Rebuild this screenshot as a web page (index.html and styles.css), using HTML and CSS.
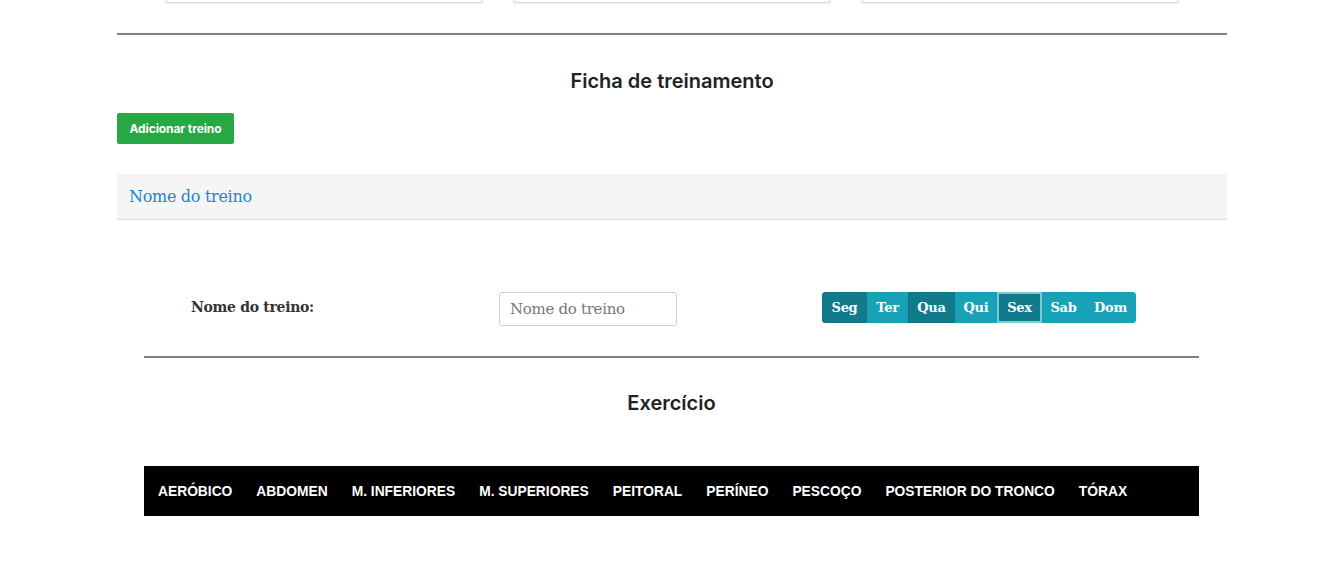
FILE: index.html
```html
<!DOCTYPE html>
<html lang="pt">
<head>
<meta charset="utf-8">
<title>Ficha de treinamento</title>
<link rel="stylesheet" href="styles.css">
</head>
<body>
<div class="container">
  <div class="top-fields">
    <div class="field-stub"></div>
    <div class="field-stub"></div>
    <div class="field-stub"></div>
  </div>
  <hr class="rule rule-top">
  <h2 class="section-title title-ficha">Ficha de treinamento</h2>
  <button class="btn-add" type="button">Adicionar treino</button>
  <div class="panel">
    <div class="panel-heading"><a class="panel-link">Nome do treino</a></div>
    <div class="panel-body">
      <div class="form-row">
        <label class="form-label">Nome do treino:</label>
        <input class="form-input" type="text" placeholder="Nome do treino">
        <div class="day-group">
          <button class="day dark" type="button">Seg</button>
          <button class="day" type="button">Ter</button>
          <button class="day dark" type="button">Qua</button>
          <button class="day" type="button">Qui</button>
          <button class="day dark focus" type="button">Sex</button>
          <button class="day" type="button">Sab</button>
          <button class="day last" type="button">Dom</button>
        </div>
      </div>
      <hr class="rule rule-inner">
      <h2 class="section-title title-ex">Exercício</h2>
      <nav class="cat-nav">
        <a>AERÓBICO</a>
        <a>ABDOMEN</a>
        <a>M. INFERIORES</a>
        <a>M. SUPERIORES</a>
        <a>PEITORAL</a>
        <a>PERÍNEO</a>
        <a>PESCOÇO</a>
        <a>POSTERIOR DO TRONCO</a>
        <a>TÓRAX</a>
      </nav>
    </div>
  </div>
</div>
</body>
</html>
```

FILE: styles.css
```css
* { box-sizing: border-box; }
html, body { margin: 0; padding: 0; background: #fff; }
body {
  font-family: "DejaVu Serif", serif;
  color: #333;
  width: 1339px;
  height: 581px;
  overflow: hidden;
}
.container {
  width: 1110px;
  margin-left: 117px;
}
.top-fields {
  display: flex;
  gap: 30px;
  padding: 0 48px;
}
.field-stub {
  flex: 1;
  height: 3px;
  border: 1px solid #d4d7db;
  border-top: none;
  border-radius: 0 0 4px 4px;
  box-shadow: 0 1px 1px rgba(0,0,0,0.05);
}
.rule {
  border: none;
  height: 2px;
  background: #808080;
  margin: 0;
}
.rule-top { margin-top: 30px; }
.section-title {
  font-family: "Inter", "Open Sans", sans-serif;
  font-weight: 600;
  font-size: 20px;
  color: #222;
  text-align: center;
  margin: 0;
  line-height: 24px;
}
.title-ficha { margin-top: 34px; }
.btn-add {
  display: block;
  margin-top: 20px;
  width: 117px;
  height: 31px;
  background: #28a745;
  border: 1px solid #28a745;
  border-radius: 2px;
  color: #fff;
  font-family: "Inter", "Open Sans", sans-serif;
  font-weight: 700;
  font-size: 12px;
  letter-spacing: -0.1px;
  padding: 0;
}
.panel { margin-top: 30px; }
.panel-heading {
  background: #f5f5f5;
  border-bottom: 1px solid #dddddd;
  height: 46px;
  padding: 0 12px;
  display: flex;
  align-items: center;
}
.panel-link {
  color: #1a87c9;
  font-size: 16px;
  letter-spacing: -0.3px;
}
.panel-body {
  padding: 72px 28px 0 27px;
}
.form-row {
  display: grid;
  grid-template-columns: 308px 323px auto;
  align-items: center;
  padding-left: 47px;
  height: 34px;
}
.form-label {
  font-weight: 700;
  font-size: 14px;
  color: #333;
  letter-spacing: -0.3px;
  margin-top: -4px;
}
.form-input {
  width: 178px;
  height: 34px;
  border: 1px solid #cfcfcf;
  border-radius: 3px;
  padding: 0 10px;
  font-family: "DejaVu Serif", serif;
  font-size: 15px;
  letter-spacing: -0.3px;
  color: #555;
}
.form-input::placeholder { color: #777; }
.day-group {
  display: flex;
  height: 31px;
  margin-top: -3px;
}
.day {
  background: #17a2b8;
  border: 1px solid #17a2b8;
  color: #fff;
  font-family: "DejaVu Serif", serif;
  font-weight: 700;
  font-size: 13px;
  letter-spacing: -0.3px;
  padding: 0;
  height: 31px;
}
.day:first-child { border-radius: 3px 0 0 3px; width: 45px; }
.day.last { border-radius: 0 3px 3px 0; }
.day.dark { background: #117a8b; border-color: #10707f; }
.day.focus { box-shadow: inset 0 0 0 1px #7fc8d4; border-color: #7fc8d4; }
.day:nth-child(2) { width: 41px; }
.day:nth-child(3) { width: 47px; }
.day:nth-child(4) { width: 42px; }
.day:nth-child(5) { width: 45px; }
.day:nth-child(6) { width: 43px; }
.day:nth-child(7) { width: 51px; }
.rule-inner { margin-top: 30px; }
.title-ex { margin-top: 33px; }
.cat-nav {
  margin-top: 51px;
  background: #000;
  height: 50px;
  display: flex;
  align-items: center;
  gap: 24px;
  padding: 0 14px;
  margin-bottom: 0;
}
.cat-nav a {
  color: #fff;
  font-family: "Liberation Sans", Arial, sans-serif;
  font-weight: 700;
  font-size: 13.8px;
  padding-top: 1px;
}
```
